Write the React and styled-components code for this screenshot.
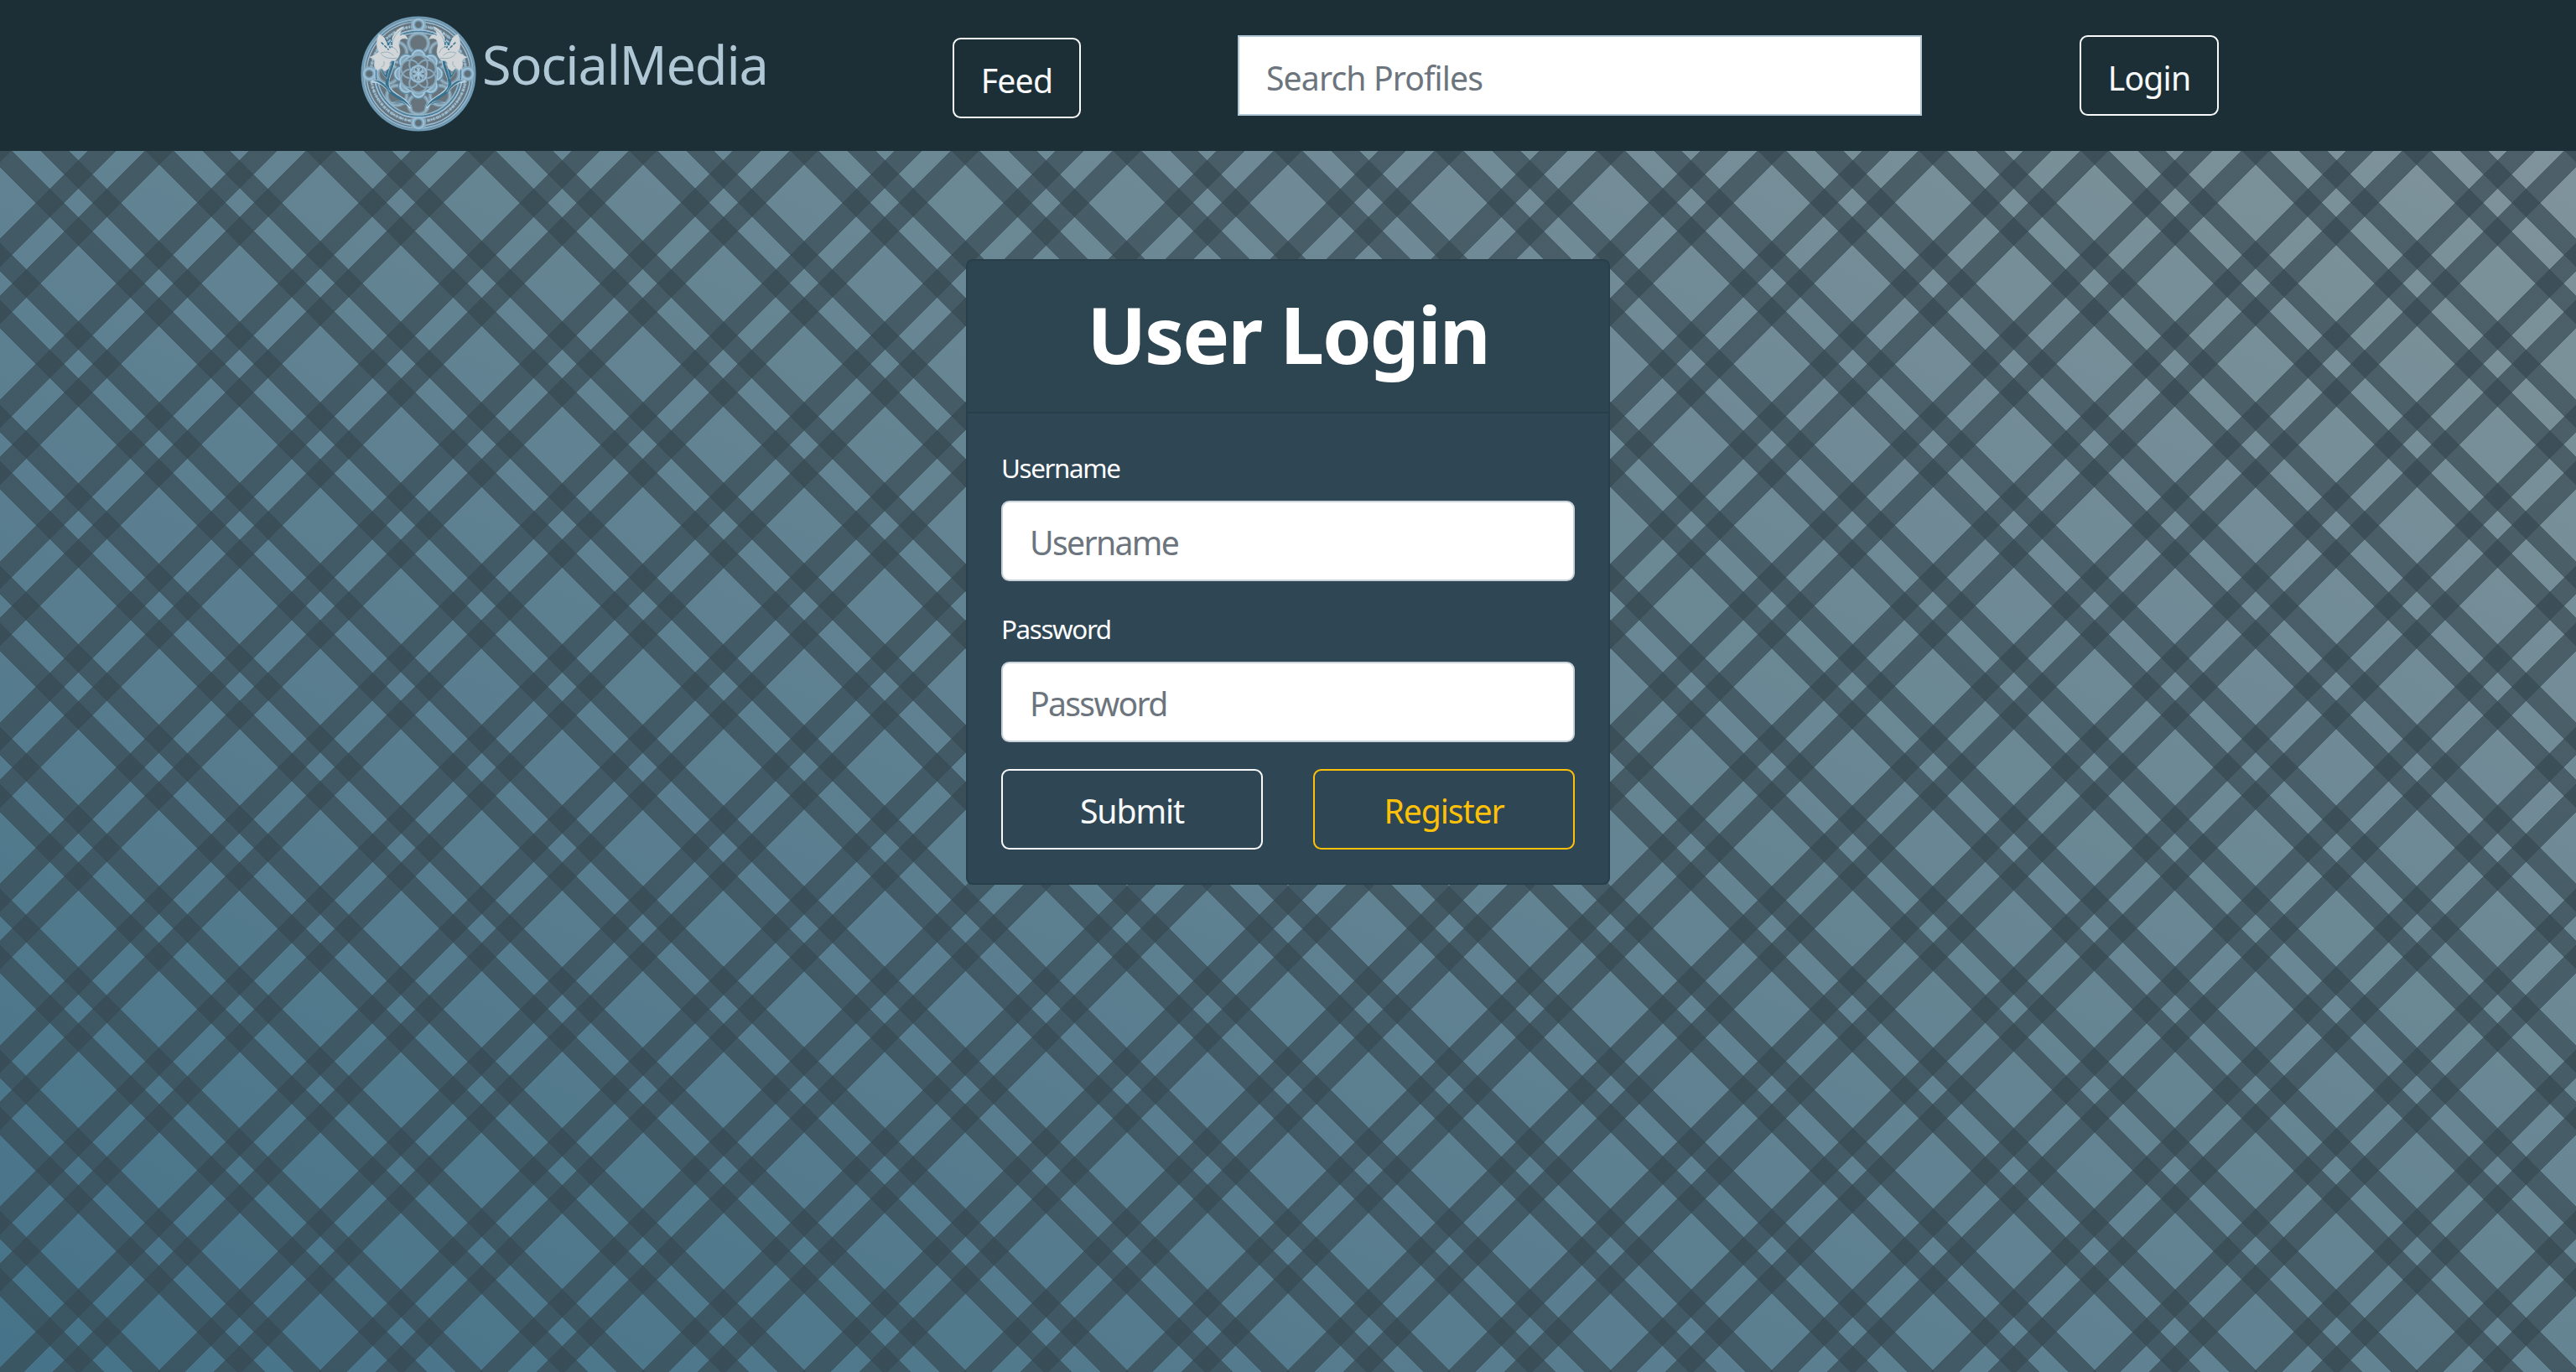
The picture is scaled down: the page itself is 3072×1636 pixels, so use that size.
import React from "react";
import styled, { createGlobalStyle } from "styled-components";

const Global = createGlobalStyle`
  body { margin: 0; }
  *, *::before, *::after { box-sizing: border-box; }
  input, button { font-family: inherit; }
`;

const stripe = "rgba(54, 73, 82, 0.69)";
const stripes = (angle) =>
  `repeating-linear-gradient(${angle}, transparent 0, transparent 64px, ${stripe} 64px, ${stripe} 88px, transparent 88px, transparent 112px, ${stripe} 112px, ${stripe} 136px)`;

const Page = styled.div`
  width: 3072px;
  height: 1636px;
  overflow: hidden;
  font-family: "Noto Sans", sans-serif;
  color: #fff;
  background: ${stripes("45deg")}, ${stripes("-45deg")},
    linear-gradient(to top right, #467389, #82959c);
`;

const Nav = styled.header`
  display: flex;
  align-items: flex-start;
  height: 180px;
  padding-left: 430px;
  background: #1d2f36;
`;

const Brand = styled.a`
  display: flex;
  width: 706px;
  padding-top: 19px;
  gap: 7px;
  color: #b0c8d6;
`;

const BrandName = styled.span`
  font-size: 63px;
  line-height: 96px;
  letter-spacing: -1.2px;
  padding-top: 10px;
`;

const Search = styled.input`
  width: 816px;
  height: 96px;
  margin: 42px 188px 0 187px;
  border: 2px solid #b0c8d6;
  border-radius: 0;
  padding: 4px 32px 0;
  font-size: 39.2px;
  letter-spacing: -0.9px;
  background: #fff;
  &::placeholder { color: #6c757d; opacity: 1; }
`;

const Button = styled.button`
  width: ${(p) => p.$w}px;
  height: 96px;
  margin: ${(p) => p.$mt || 0}px 0 0;
  padding: ${(p) => p.$pt || 4}px 0 0;
  border: 2px solid ${(p) => p.$color || "#f8f9fa"};
  border-radius: 9.6px;
  background: transparent;
  color: ${(p) => p.$color || "#f8f9fa"};
  font-size: 39.2px;
  letter-spacing: ${(p) => p.$ls || -0.8}px;
`;

const Main = styled.main`
  display: flex;
  justify-content: center;
  padding-top: 129px;
`;

const Card = styled.section`
  width: 768px;
  border: 2px solid #283f4a;
  border-radius: 8px;
  background: #2f4654;
  overflow: hidden;
`;

const CardHeader = styled.div`
  height: 182px;
  padding-top: 27px;
  border-bottom: 2px solid #283f4a;
  background: #2d4551;
  text-align: center;
`;

const Title = styled.h1`
  margin: 0;
  font-size: 94px;
  font-weight: 700;
  line-height: 120px;
  letter-spacing: -2.1px;
`;

const Form = styled.div`
  display: flex;
  flex-direction: column;
  padding: 40px;
`;

const Label = styled.label`
  height: 48px;
  margin-bottom: 16px;
  padding-top: 1px;
  font-size: 31.4px;
  line-height: 48px;
  letter-spacing: -1.4px;
`;

const Field = styled.input`
  height: 96px;
  margin-bottom: 32px;
  padding: 3px 32px 0;
  border: 2px solid #c8d1da;
  border-radius: 9.6px;
  background: #fff;
  font-size: 39.2px;
  letter-spacing: -1.7px;
  &::placeholder { color: #6c757d; opacity: 1; }
`;

const Actions = styled.div`
  display: flex;
  justify-content: space-between;
`;

const ring = (n, r, fn) =>
  Array.from({ length: n }, (_, i) => {
    const a = (i * 2 * Math.PI) / n - Math.PI / 2;
    return fn(70 + r * Math.cos(a), 70 + r * Math.sin(a), i);
  });

function Flower() {
  return (
    <g>
      <g fill="none" stroke="#b9d3e2" strokeWidth="4" strokeLinecap="round">
        <path d="M40 54C39 66 29 78 34 87C40 97 52 98 60 110" />
        <path d="M15 79C24 79 28 83 34 89" />
      </g>
      <path d="M41 54C40 66 31 77 35 87C41 97 53 97 61 111C52 101 37 99 31 88C27 77 37 66 38 54Z" fill="#37718d" />
      <path d="M14 78C25 76 31 83 36 92C29 87 25 80 14 78ZM38 105Q48 100 57 108Q48 104 38 105ZM56 103Q63 106 62 114Q61 107 56 103ZM25 62L30 71L31 64L35 63L32 76Q24 69 25 62Z" fill="#37718d" stroke="#b9d3e2" strokeWidth="0.5" />
      <path d="M22 22Q31 25 32 36L36 36C37 25 44 15 52 13C49 18 47 21 48 24Q54 20 57 28C48 25 45 31 47 39C49 45 46 51 42 54L37 54L35 57Q36 64 29 67L25 63L20 66Q15 60 17 55L16 52L11 50Q20 46 22 43Q17 36 22 22Z" fill="#d2d6d8" stroke="#b9cedb" strokeWidth="0.7" />
      <path d="M24 45Q34 41 40 48M25 46Q30 53 44 51M36 37Q43 38 45 45M38 35Q40 22 50 16M28 55Q30 60 25 62" fill="none" stroke="#8fabba" strokeWidth="0.9" />
      <path d="M25 32L34 41M30 27L36 39M37 26L38 38" stroke="#33708c" strokeWidth="1.5" strokeDasharray="4 1.4" />
    </g>
  );
}

function Logo() {
  return (
    <svg width="138" height="138" viewBox="0 0 140 140">
      <circle cx="70" cy="70" r="68.2" fill="#68747b" stroke="#6f9bb5" strokeWidth="2.6" />
      <circle cx="70" cy="70" r="65.8" fill="none" stroke="#8fb5ce" strokeWidth="2" />
      <circle cx="70" cy="70" r="64" fill="none" stroke="#568098" strokeWidth="1" />
      <circle cx="70" cy="70" r="62.8" fill="none" stroke="#9dc0d8" strokeWidth="1.4" />
      <circle cx="70" cy="70" r="57.6" fill="none" stroke="#8fb0c5" strokeWidth="3.6" strokeDasharray="3 1 1.6 0.8 4 1.2" />
      <circle cx="70" cy="70" r="57.6" fill="none" stroke="#a3c6dc" strokeWidth="1.2" strokeDasharray="2 2.2 4 1.4" />
      {ring(8, 37, (x, y, i) => (
        <g key={i}>
          <circle cx={x} cy={y} r="12" fill="none" stroke="#7f9bac" strokeWidth="4.5" />
          <circle cx={x} cy={y} r="12" fill="none" stroke="#98b8cb" strokeWidth="1.4" />
        </g>
      ))}
      <circle cx="70" cy="70" r="53" fill="none" stroke="#9dc0d8" strokeWidth="2" />
      <circle cx="70" cy="70" r="51.3" fill="none" stroke="#497f9c" strokeWidth="1.4" />
      <circle cx="70" cy="70" r="49.7" fill="none" stroke="#94b6cb" strokeWidth="1.6" />
      {ring(4, 59.5, (x, y, i) => (
        <g key={i}>
          <rect x={x - 9} y={y - 6} width="18" height="12" rx="2" fill="#86a8bd" transform={`rotate(${i * 90} ${x} ${y})`} />
          <circle cx={x} cy={y} r="6.6" fill="#86abc3" stroke="#9fc3da" strokeWidth="1.6" />
          <circle cx={x} cy={y} r="4.4" fill="#5f6f78" stroke="#7aa2ba" strokeWidth="1" />
        </g>
      ))}
      {ring(8, 21, (x, y, i) => (
        <circle key={i} cx={x} cy={y} r="9.2" fill="#8fb0c6" stroke="#5c8ba5" strokeWidth="1.2" />
      ))}
      {ring(8, 20.5, (x, y, i) => (
        <circle key={i} cx={x} cy={y} r="7.6" fill="#87a9be" stroke="#aacbdf" strokeWidth="1.5" />
      ))}
      <circle cx="70" cy="70" r="23" fill="#68747b" stroke="#9cc0d6" strokeWidth="2" />
      {ring(6, 11.5, (x, y, i) => (
        <circle key={i} cx={x} cy={y} r="11" fill="none" stroke="#86a8bd" strokeWidth="2" />
      ))}
      <circle cx="70" cy="70" r="10" fill="none" stroke="#93b6cc" strokeWidth="2" />
      {ring(6, 5, (x, y, i) => (
        <circle key={i} cx={x} cy={y} r="5" fill="none" stroke="#a5c8dd" strokeWidth="1" />
      ))}
      <Flower />
      <g transform="translate(140 0) scale(-1 1)"><Flower /></g>
    </svg>
  );
}

export default function App() {
  return (
    <Page>
      <Global />
      <Nav>
        <Brand>
          <Logo />
          <BrandName>SocialMedia</BrandName>
        </Brand>
        <Button $w={153} $mt={45}>Feed</Button>
        <Search placeholder="Search Profiles" />
        <Button $w={166} $mt={42}>Login</Button>
      </Nav>
      <Main>
        <Card>
          <CardHeader>
            <Title>User Login</Title>
          </CardHeader>
          <Form>
            <Label htmlFor="username">Username</Label>
            <Field id="username" placeholder="Username" />
            <Label htmlFor="password">Password</Label>
            <Field id="password" type="password" placeholder="Password" />
            <Actions>
              <Button $w={312} $ls={-1.1} $pt={3}>Submit</Button>
              <Button $w={312} $ls={-1.1} $pt={3} $color="#ffc107">Register</Button>
            </Actions>
          </Form>
        </Card>
      </Main>
    </Page>
  );
}
